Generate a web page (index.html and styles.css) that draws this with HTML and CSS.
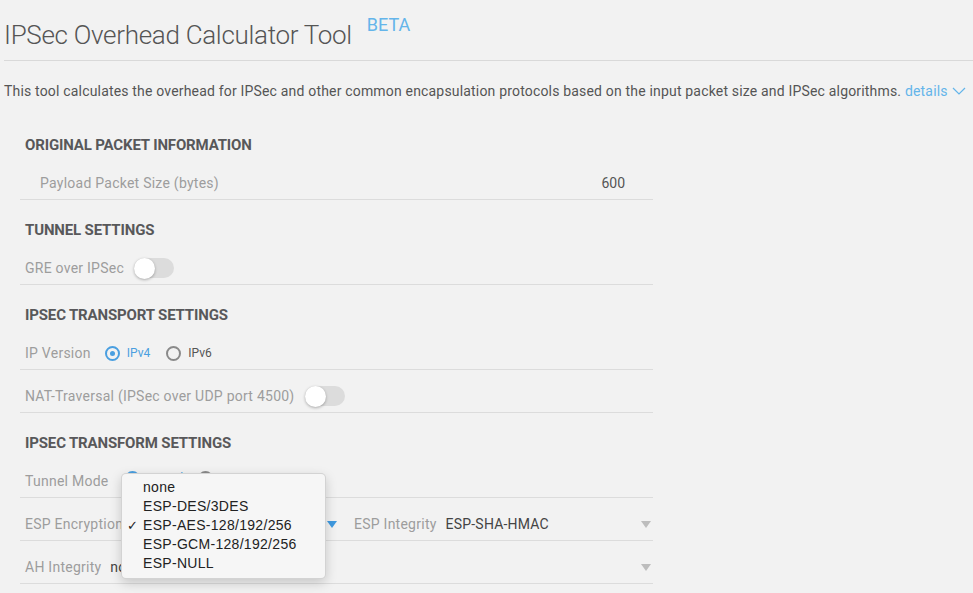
FILE: index.html
```html
<!DOCTYPE html>
<html lang="en">
<head>
<meta charset="utf-8">
<title>IPSec Overhead Calculator Tool</title>
<link rel="stylesheet" href="styles.css">
</head>
<body>
<div class="page">
  <header class="header">
    <h1 class="title">IPSec Overhead Calculator Tool</h1>
    <span class="beta">BETA</span>
  </header>
  <p class="desc">This tool calculates the overhead for IPSec and other common encapsulation protocols based on the input packet size and IPSec algorithms. <a class="details">details <svg class="chev" width="14" height="8" viewBox="0 0 14 8"><path d="M1 1 L7 7 L13 1" fill="none" stroke="#64b5ea" stroke-width="1.2"/></svg></a></p>

  <div class="form">
    <h2 class="section">ORIGINAL PACKET INFORMATION</h2>
    <div class="row input-row">
      <span class="label">Payload Packet Size (bytes)</span>
      <span class="input-val">600</span>
    </div>

    <h2 class="section">TUNNEL SETTINGS</h2>
    <div class="row">
      <span class="label">GRE over IPSec</span>
      <span class="toggle"><span class="knob"></span></span>
    </div>

    <h2 class="section">IPSEC TRANSPORT SETTINGS</h2>
    <div class="row">
      <span class="label">IP Version</span>
      <span class="radios">
        <span class="radio on"><span class="circle"></span><span class="rtext">IPv4</span></span>
        <span class="radio"><span class="circle"></span><span class="rtext">IPv6</span></span>
      </span>
    </div>
    <div class="row">
      <span class="label">NAT-Traversal (IPSec over UDP port 4500)</span>
      <span class="toggle"><span class="knob"></span></span>
    </div>

    <h2 class="section">IPSEC TRANSFORM SETTINGS</h2>
    <div class="row">
      <span class="label">Tunnel Mode</span>
      <span class="radios raised">
        <span class="radio on"><span class="circle"></span><span class="rtext">Tunnel</span></span>
        <span class="radio"><span class="circle"></span><span class="rtext">Transport</span></span>
      </span>
    </div>
    <div class="row split menu-anchor">
      <div class="select">
        <span class="label">ESP Encryption</span>
        <span class="value">ESP-AES-128/192/256</span>
        <span class="caret blue"></span>
      </div>
      <div class="select">
        <span class="label">ESP Integrity</span>
        <span class="value">ESP-SHA-HMAC</span>
        <span class="caret"></span>
      </div>
      <ul class="menu">
        <li class="item">none</li>
        <li class="item">ESP-DES/3DES</li>
        <li class="item checked"><span class="check">✓</span>ESP-AES-128/192/256</li>
        <li class="item">ESP-GCM-128/192/256</li>
        <li class="item">ESP-NULL</li>
      </ul>
    </div>
    <div class="row">
      <div class="select full">
        <span class="label">AH Integrity</span>
        <span class="value">none</span>
        <span class="caret"></span>
      </div>
    </div>
  </div>
</div>
</body>
</html>
```

FILE: styles.css
```css
html, body {
  margin: 0;
  padding: 0;
  background: #f2f2f2;
  font-family: Roboto, "Liberation Sans", Arial, sans-serif;
  overflow: hidden;
}

.page {
  width: 973px;
  height: 593px;
}

.header {
  display: flex;
  align-items: flex-start;
  margin-left: 4px;
  box-sizing: border-box;
  height: 61px;
  padding-top: 19px;
  border-bottom: 1px solid #d9d9d9;
}

.title {
  margin: 0;
  font-size: 26px;
  line-height: 32px;
  font-weight: 300;
  color: #555;
  letter-spacing: -0.3px;
}

.beta {
  margin-left: 15px;
  margin-top: -4px;
  font-size: 18px;
  line-height: 20px;
  color: #64b5ea;
}

.desc {
  margin: 20px 0 0 4px;
  font-size: 14px;
  line-height: 20px;
  color: #555;
  white-space: nowrap;
  letter-spacing: 0.18px;
}

.details {
  color: #64b5ea;
}

.chev {
  vertical-align: 1px;
  margin-left: 1px;
}

.form {
  margin: 0 0 0 20px;
  padding-top: 14px;
  width: 633px;
}

.section {
  margin: 20px 0 2px;
  padding-left: 5px;
  font-size: 15px;
  line-height: 20px;
  font-weight: 700;
  color: #58585a;
  letter-spacing: -0.15px;
}

.row {
  display: flex;
  align-items: center;
  padding: 16px 2px 6px 5px;
  min-height: 20px;
  line-height: 20px;
  border-bottom: 1px solid #dcdcdc;
  font-size: 14px;
}

.label {
  color: #9d9d9d;
  font-weight: 400;
  white-space: nowrap;
  letter-spacing: 0.25px;
}

.input-row {
  padding-left: 20px;
  padding-right: 28px;
  justify-content: space-between;
}

.input-val {
  color: #555;
}

.toggle {
  position: relative;
  display: inline-block;
  width: 40px;
  height: 20px;
  border-radius: 10px;
  background: #dcdcdc;
  margin-left: 10px;
}

.knob {
  position: absolute;
  left: 0;
  top: -0.5px;
  width: 21px;
  height: 21px;
  border-radius: 50%;
  background: #fff;
  box-shadow: 0 1px 3px rgba(0, 0, 0, 0.3);
}

.radios {
  display: flex;
  align-items: center;
  gap: 16px;
  margin-left: 14px;
}

.radios.raised {
  margin-left: 17px;
  margin-top: -6px;
  gap: 15px;
}

.radio {
  display: flex;
  align-items: center;
  gap: 7px;
  font-size: 12px;
  color: #555;
}

.circle {
  width: 11px;
  height: 11px;
  border-radius: 50%;
  border: 2px solid #8a8a8a;
  position: relative;
}

.radio.on .circle {
  border-color: #4a9fe0;
}

.radio.on .circle::after {
  content: "";
  position: absolute;
  left: 3px;
  top: 3px;
  width: 5px;
  height: 5px;
  border-radius: 50%;
  background: #4a9fe0;
}

.radio.on .rtext {
  color: #4a9fe0;
}

.split {
  display: grid;
  grid-template-columns: 315px 1fr;
  column-gap: 14px;
}

.menu-anchor {
  position: relative;
}

.select {
  display: flex;
  align-items: center;
  gap: 9px;
}

.select.full {
  flex: 1;
}

.select .value {
  flex: 1;
  color: #444;
  white-space: nowrap;
  letter-spacing: 0.2px;
}

.caret {
  width: 0;
  height: 0;
  border-left: 5.5px solid transparent;
  border-right: 5.5px solid transparent;
  border-top: 7px solid #bdbdbd;
}

.caret.blue {
  border-left-width: 5px;
  border-right-width: 5px;
  border-top: 7px solid #3f9ae0;
  margin-right: 3px;
}

.menu {
  position: absolute;
  left: 101px;
  top: -25px;
  width: 203px;
  margin: 0;
  padding: 4px 0 5px;
  list-style: none;
  background: #f6f6f6;
  border: 1px solid rgba(0, 0, 0, 0.14);
  border-radius: 5px;
  box-shadow: 0 4px 12px rgba(0, 0, 0, 0.18);
  font-family: "Liberation Sans", Arial, sans-serif;
  font-size: 14px;
  color: #222;
}

.item {
  position: relative;
  line-height: 19px;
  padding-left: 21px;
  white-space: nowrap;
  letter-spacing: 0.3px;
}

.check {
  position: absolute;
  left: 5px;
  top: 0;
  font-family: "DejaVu Sans", sans-serif;
  font-size: 13px;
}
```
